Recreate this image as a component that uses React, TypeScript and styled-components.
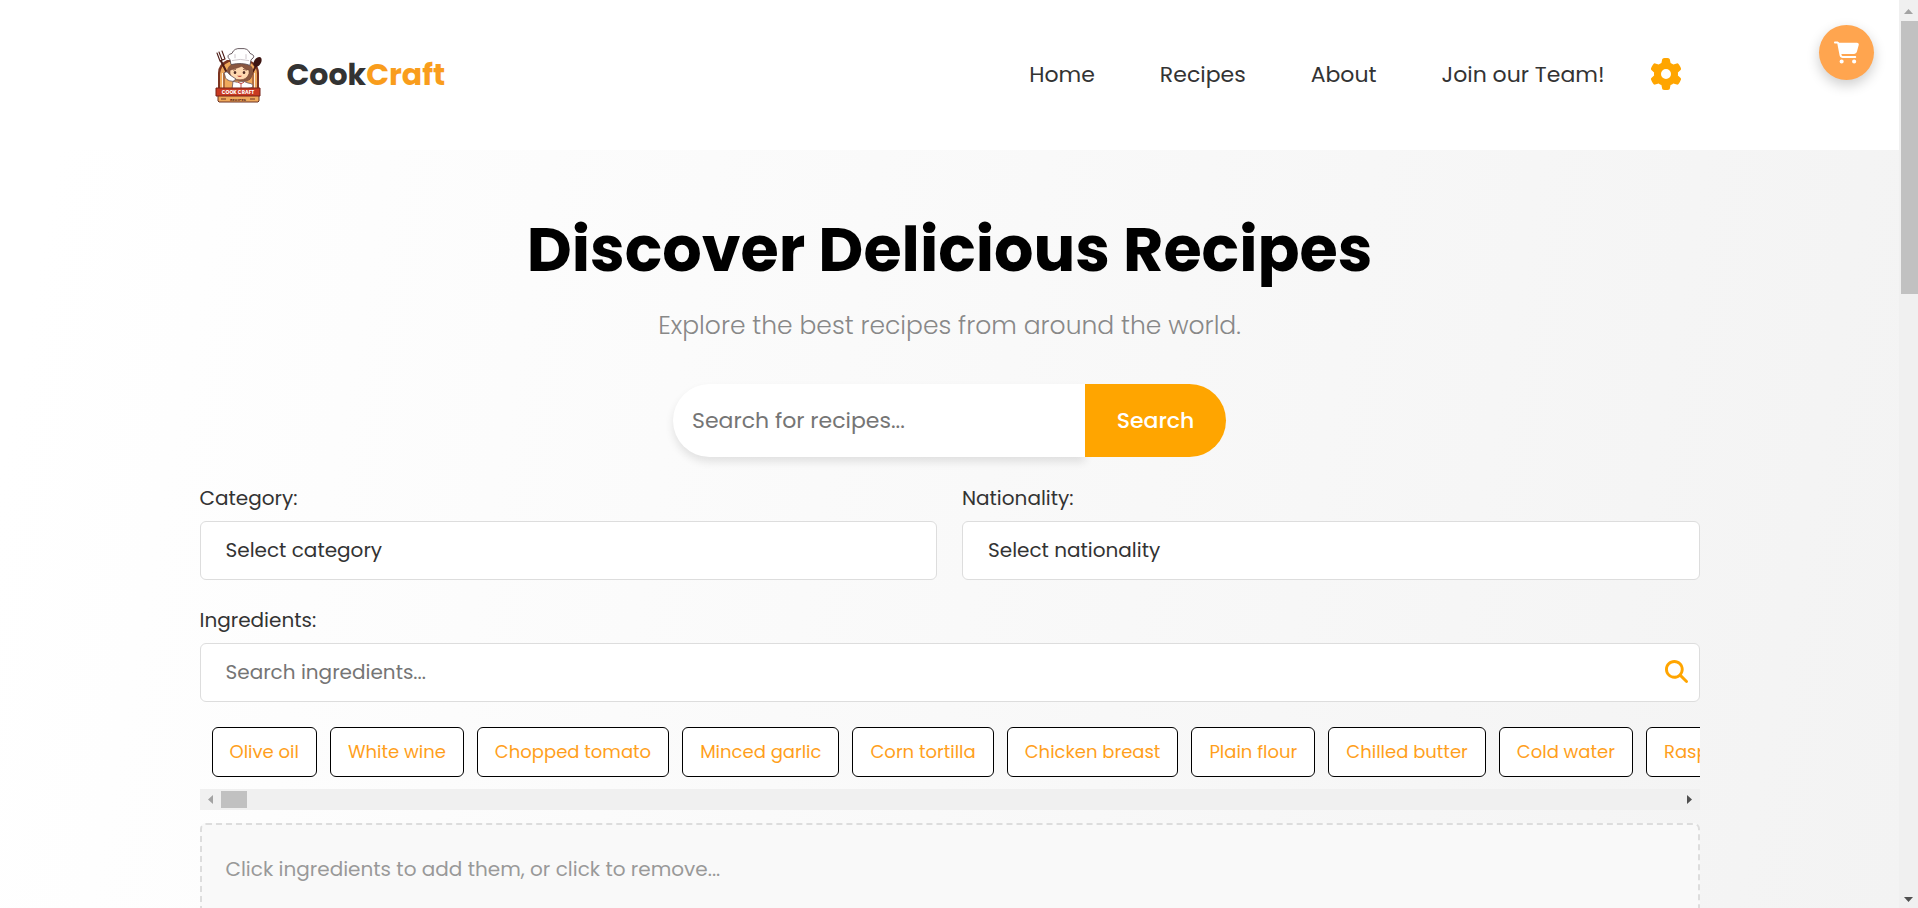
import React from "react";
import styled, { createGlobalStyle } from "styled-components";
import { FaCartShopping, FaGear, FaMagnifyingGlass } from "react-icons/fa6";

const GlobalStyle = createGlobalStyle`
  * { box-sizing: border-box; }
  body {
    margin: 0;
    color: #333;
    font-family: Poppins, Inter, "Liberation Sans", sans-serif;
    font-size: 20px;
    line-height: 30px;
  }
  button, input, select { font: inherit; }
`;

const Shell = styled.div`
  display: flex;
  height: 100vh;
  overflow: hidden;
`;

const Page = styled.div`
  position: relative;
  flex: 1;
  min-width: 0;
  overflow: hidden;
  background: linear-gradient(100deg, #fff 4%, #f3f3f3 100%);
`;

const Header = styled.header`
  background: #fff;
`;

const HeaderInner = styled.div`
  display: flex;
  align-items: center;
  justify-content: space-between;
  max-width: 1500px;
  height: 150px;
  margin: 0 auto;
`;

const Brand = styled.a`
  display: flex;
  align-items: center;
  gap: 11px;
  color: #333;
  font-size: 30px;
  font-weight: 700;
  text-decoration: none;

  svg { width: 76px; height: 76px; }
`;

const Accent = styled.span`
  color: #f99d1c;
`;

const Nav = styled.nav`
  display: flex;
  align-items: center;
  gap: 65px;
  padding-right: 18px;
`;

const NavLink = styled.a`
  color: #333;
  font-size: 22px;
  text-decoration: none;
`;

const GearButton = styled.button`
  display: flex;
  margin-left: -20px;
  padding: 0 0 2px;
  border: 0;
  background: none;
  color: orange;
  font-size: 32px;
`;

const CartButton = styled.button`
  position: absolute;
  top: 25px;
  right: 25px;
  display: grid;
  place-items: center;
  width: 55px;
  height: 55px;
  padding: 0;
  border: 0;
  border-radius: 50%;
  background: #ffa54f;
  box-shadow: 0 5px 13px rgba(0, 0, 0, 0.2);
  color: #fff;
  font-size: 25px;
`;

const Container = styled.main`
  max-width: 1500px;
  margin: 0 auto;
  padding-top: 60px;
`;

const Title = styled.h1`
  margin: 0 0 21px;
  color: #000;
  font-size: 62px;
  font-weight: 700;
  line-height: 80px;
  text-align: center;
`;

const Subtitle = styled.p`
  margin: 0 0 43px;
  color: #888;
  font-size: 25px;
  font-weight: 300;
  text-align: center;
`;

const SearchForm = styled.form`
  display: flex;
  justify-content: center;
  margin-bottom: 26px;
  font-size: 22px;
`;

const SearchInput = styled.input`
  width: 412px;
  height: 73px;
  padding: 0 19px;
  border: 0;
  border-radius: 37px 0 0 37px;
  background: #fff;
  box-shadow: 0 5px 8px rgba(0, 0, 0, 0.1);
  &::placeholder { color: #757575; }
`;

const SearchButton = styled.button`
  width: 141px;
  padding: 0;
  border: 0;
  border-radius: 0 37px 37px 0;
  background: orange;
  color: #fff;
  font-weight: 500;
`;

const FilterRow = styled.div`
  display: grid;
  grid-template-columns: 1fr 1fr;
  gap: 25px;
  margin-bottom: 25px;
`;

const Field = styled.div`
  display: flex;
  flex-direction: column;
  gap: 8px;
`;

const Select = styled.select`
  height: 59px;
  padding: 0 25px 2px;
  appearance: none;
  border: 1px solid #ddd;
  border-radius: 6px;
  background: #fff;
  color: #333;
`;

const IngredientBox = styled.div`
  display: flex;
  align-items: center;
  height: 59px;
  padding: 0 11px 2px 0;
  border: 1px solid #ddd;
  border-radius: 6px;
  background: #fff;
`;

const IngredientInput = styled.input`
  flex: 1;
  padding: 0 25px;
  border: 0;
  background: none;
  &::placeholder { color: #757575; }
`;

const IconButton = styled.button`
  display: flex;
  padding: 0;
  border: 0;
  background: none;
  color: orange;
  font-size: 23px;
`;

const ChipList = styled.div`
  display: flex;
  gap: 13px;
  margin-top: 25px;
  padding: 0 12px 12px;
  overflow: hidden;
`;

const Chip = styled.button`
  flex: none;
  height: 50px;
  padding: 0 17px;
  border: 1px solid #000;
  border-radius: 6px;
  background: #fff;
  color: #ff9f1c;
  font-size: 18px;
  white-space: nowrap;
`;

const ScrollTrack = styled.div<{ $vertical?: boolean }>`
  display: flex;
  flex: none;
  flex-direction: ${(p) => (p.$vertical ? "column" : "row")};
  align-items: ${(p) => (p.$vertical ? "flex-end" : "center")};
  ${(p) => (p.$vertical ? "width: 19px;" : "height: 21px;")}
  background: #f0f0f0;
`;

const ScrollThumb = styled.div<{ $vertical?: boolean }>`
  width: ${(p) => (p.$vertical ? "17px" : "26px")};
  height: ${(p) => (p.$vertical ? "273px" : "17px")};
  margin: ${(p) => (p.$vertical ? "0 0 auto" : "0 auto 0 0")};
  background: #c1c1c1;
`;

const ScrollArrow = styled.svg`
  flex: none;
  width: 21px;
  height: 21px;
`;

const Basket = styled.div`
  min-height: 180px;
  margin-top: 13px;
  padding: 29px 24px;
  border: 2px dashed #ddd;
  border-radius: 6px;
  background: #f9f9f9;
  color: #999;
`;

const Logo = () => (
  <svg viewBox="0 0 76 76" aria-hidden="true">
    <path d="M18 55V36q0-9 9-13h22q10 4 10 13v19z" fill="#7b3420" />
    <path d="M20 54V37q1-9 9-12h19q9 3 9 12v17z" fill="#efa95c" />
    <path d="M22.500 54V36M54.500 54V36" stroke="#fff0dc" strokeWidth="1" />
    <path d="M24 54V36M53 54V36" stroke="#7b3420" strokeWidth="1" />
    <g stroke="#4d1b15" strokeLinecap="round" fill="none">
      <path d="M21 24 28 38" strokeWidth="2" />
      <path d="M17 16l3 8 5-2-3-8M19 15l3 8" strokeWidth="1.1" />
      <path d="M56 29 49 42" strokeWidth="2" />
    </g>
    <ellipse cx="57.500" cy="25" rx="3.500" ry="5.500" transform="rotate(32 57.500 25)" fill="#3d1512" />
    <g transform="translate(0 2) scale(1 .8)">
      <path d="M27 43q-1-13 13-13t13 11q0 9-6 12l-13-1q-6-3-7-9z" fill="#8a5740" />
      <path d="M30 39q8-3 12-5 2 4 7 5v4q-2 8-9 8-9 0-10-8z" fill="#ffd8b0" stroke="#704030" strokeWidth=".6" />
      <path d="M33 39l3-1M43 38l4 1" stroke="#704030" strokeWidth=".8" />
      <ellipse cx="35" cy="42" rx="1.300" ry="1.900" fill="#512c25" />
      <ellipse cx="44" cy="42" rx="1.300" ry="1.900" fill="#512c25" />
      <path d="M37 46q3 3 5 0z" fill="#b94336" />
      <path d="M31 32l-1-6q-5-6 2-8 2-7 9-6 7-1 9 6 7 3 1 8l-1 7q-8-4-19-1z" fill="#fff" stroke="#594b50" strokeWidth="1" />
      <path d="M32 27q8-3 17 0M35 19v5M46 19v6" fill="none" stroke="#c8c0c5" strokeWidth="1" />
      <path d="M32 63l1-10 4 1 7-1 4 2q7 1 4 6l-5 1v2zM33 53q-8-1-8-7l-1-4 3-1 3 4 6 5z" fill="#fff" stroke="#68535a" strokeWidth=".9" />
      <path d="M38 54l3 2 3-2M41 56v6" fill="none" stroke="#c0433d" strokeWidth="1" />
    </g>
    <path d="M18 58h41v6l-1 1H19l-1-1z" fill="#efa95c" stroke="#6c3020" strokeWidth="1" />
    <path d="M16 51h44v8H16z" fill="#c83921" stroke="#762218" strokeWidth="1" />
    <text x="38" y="57" textAnchor="middle" fontSize="5" fontWeight="700" fill="#fff">COOK CRAFT</text>
    <path d="M21 62h5M50 62h5" stroke="#6c3020" />
    <text x="38" y="64" textAnchor="middle" fontSize="4" fontWeight="700" fill="#6c3020">RECIPES</text>
  </svg>
);

const links = ["Home", "Recipes", "About", "Join our Team!"];
const ingredients = [
  "Olive oil", "White wine", "Chopped tomato", "Minced garlic", "Corn tortilla",
  "Chicken breast", "Plain flour", "Chilled butter", "Cold water", "Raspberry jam",
];

export default function App() {
  return (
    <Shell>
      <GlobalStyle />
      <Page>
        <Header>
          <HeaderInner>
            <Brand href="#">
              <Logo />
              <span>Cook<Accent>Craft</Accent></span>
            </Brand>
            <Nav>
              {links.map((label) => <NavLink href="#" key={label}>{label}</NavLink>)}
              <GearButton aria-label="Settings"><FaGear /></GearButton>
            </Nav>
          </HeaderInner>
        </Header>
        <CartButton aria-label="Cart"><FaCartShopping /></CartButton>
        <Container>
          <Title>Discover Delicious Recipes</Title>
          <Subtitle>Explore the best recipes from around the world.</Subtitle>
          <SearchForm onSubmit={(e) => e.preventDefault()}>
            <SearchInput aria-label="Search for recipes" placeholder="Search for recipes..." />
            <SearchButton type="submit">Search</SearchButton>
          </SearchForm>
          <FilterRow>
            <Field>
              <label htmlFor="category">Category:</label>
              <Select id="category"><option>Select category</option></Select>
            </Field>
            <Field>
              <label htmlFor="nationality">Nationality:</label>
              <Select id="nationality"><option>Select nationality</option></Select>
            </Field>
          </FilterRow>
          <Field>
            <label htmlFor="ingredients">Ingredients:</label>
            <IngredientBox>
              <IngredientInput id="ingredients" placeholder="Search ingredients..." />
              <IconButton aria-label="Search ingredients"><FaMagnifyingGlass /></IconButton>
            </IngredientBox>
          </Field>
          <ChipList>
            {ingredients.map((name) => <Chip key={name}>{name}</Chip>)}
          </ChipList>
          <ScrollTrack aria-hidden="true">
            <ScrollArrow viewBox="0 0 21 21"><path d="M13 6v9l-5-4.500z" fill="#a3a3a3" /></ScrollArrow>
            <ScrollThumb />
            <ScrollArrow viewBox="0 0 21 21"><path d="M8 6v9l5-4.500z" fill="#505050" /></ScrollArrow>
          </ScrollTrack>
          <Basket>Click ingredients to add them, or click to remove...</Basket>
        </Container>
      </Page>
      <ScrollTrack $vertical aria-hidden="true">
        <ScrollArrow viewBox="0 0 21 21"><path d="M7 14h9l-4.500-5z" fill="#a3a3a3" /></ScrollArrow>
        <ScrollThumb $vertical />
        <ScrollArrow viewBox="0 0 21 21"><path d="M7 10h9l-4.500 5z" fill="#505050" /></ScrollArrow>
      </ScrollTrack>
    </Shell>
  );
}
